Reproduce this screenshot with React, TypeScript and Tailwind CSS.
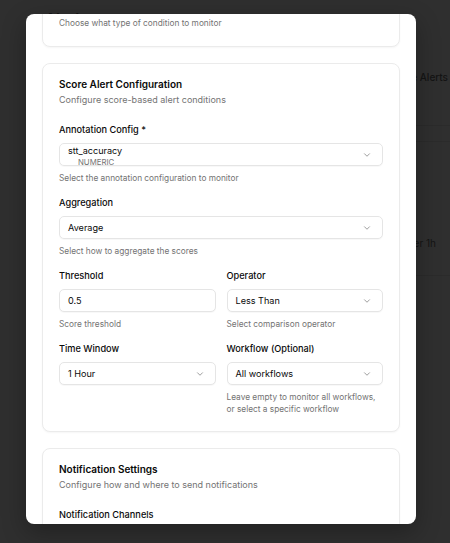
import React from "react";
import { ChevronDown } from "lucide-react";

function Chevron() {
  return <ChevronDown className="w-[10px] h-[10px] text-[#8a8a8a]" strokeWidth={2} />;
}

function SelectBox({ children }: { children: React.ReactNode }) {
  return (
    <div className="flex h-[23px] items-center justify-between rounded-[5px] border border-[#e5e5e5] bg-white pl-[8px] pr-[10px] shadow-[0_1px_1px_rgba(0,0,0,0.03)]">
      <div className="text-[9.1px] leading-[12px] text-[#0a0a0a]">{children}</div>
      <Chevron />
    </div>
  );
}

function Label({ children }: { children: React.ReactNode }) {
  return <div className="text-[9.2px] font-medium leading-[14px] text-[#0a0a0a]">{children}</div>;
}

function Help({ children }: { children: React.ReactNode }) {
  return <div className="text-[8.3px] leading-[12px] text-[#737373]">{children}</div>;
}

function Card({ title, desc, children }: { title: string; desc: string; children: React.ReactNode }) {
  return (
    <div className="rounded-[8px] border border-[#ebebeb] bg-white px-4 pt-[13px] pb-4 shadow-[0_1px_2px_rgba(0,0,0,0.04)]">
      <div className="text-[10px] font-semibold leading-[14px] text-[#0a0a0a]">{title}</div>
      <div className="mt-[2px] text-[9px] leading-[13px] text-[#737373]">{desc}</div>
      <div className="mt-[17px] flex flex-col gap-3">{children}</div>
    </div>
  );
}

export default function App() {
  return (
    <div className="relative h-[543px] w-[450px] overflow-hidden bg-[#2f2f2f] font-['Inter',sans-serif]">
      {/* background page under overlay */}
      <div className="pl-[45px] pt-[9px] text-[15px] font-semibold leading-[20px] text-[#161616]">Alerts</div>
      <div className="mt-[26px] ml-[380px] flex h-[71px] items-start justify-end border-b border-[#2b2b2b] pr-[2px] pt-[15px]">
        <span className="shrink-0 whitespace-nowrap text-[10px] font-medium leading-[14px] text-[#141414]">Manage Score Alerts</span>
      </div>
      <div className="ml-[380px] mt-[15px] flex h-[135px] items-end justify-end border-y border-[#2b2b2b] pr-[14px] pb-[25px]">
        <span className="shrink-0 whitespace-nowrap text-[10px] leading-[14px] text-[#141414]">&lt; 0.5 over 1h</span>
      </div>

      {/* modal */}
      <div className="absolute left-[26px] top-[14px] h-[510px] w-[390px] overflow-hidden rounded-[8px] bg-white shadow-[0_8px_24px_rgba(0,0,0,0.3)]">
        <div className="flex flex-col gap-4 px-4">
          <div className="-mt-[10px] rounded-[8px] border border-[#ebebeb] bg-white px-4 pt-[12px] pb-4 shadow-[0_1px_2px_rgba(0,0,0,0.04)]">
            <div className="text-[8.3px] leading-[13px] text-[#737373]">Choose what type of condition to monitor</div>
          </div>

          <Card title="Score Alert Configuration" desc="Configure score-based alert conditions">
            <div className="flex flex-col">
              <Label>Annotation Config *</Label>
              <div className="mt-[6px] flex h-[23px] items-center justify-between rounded-[5px] border border-[#e5e5e5] bg-white pl-[8px] pr-[10px] shadow-[0_1px_1px_rgba(0,0,0,0.03)]">
                <div className="flex flex-col pt-[3px]">
                  <span className="text-[9.1px] leading-[12px] text-[#0a0a0a]">stt_accuracy</span>
                  <span className="pl-[10px] text-[7.8px] leading-[10px] text-[#737373]">NUMERIC</span>
                </div>
                <Chevron />
              </div>
              <div className="mt-[6px]">
                <Help>Select the annotation configuration to monitor</Help>
              </div>
            </div>
            <div className="flex flex-col">
              <Label>Aggregation</Label>
              <div className="mt-[6px]">
                <SelectBox>Average</SelectBox>
              </div>
              <div className="mt-[6px]">
                <Help>Select how to aggregate the scores</Help>
              </div>
            </div>
            <div className="grid grid-cols-2 gap-x-[11px]">
              <div className="flex flex-col">
                <Label>Threshold</Label>
                <div className="mt-[6px] flex h-[23px] items-center rounded-[5px] border border-[#e5e5e5] bg-white px-[8px] text-[9.1px] text-[#0a0a0a] shadow-[0_1px_1px_rgba(0,0,0,0.03)]">
                  0.5
                </div>
                <div className="mt-[6px]">
                  <Help>Score threshold</Help>
                </div>
              </div>
              <div className="flex flex-col">
                <Label>Operator</Label>
                <div className="mt-[6px]">
                  <SelectBox>Less Than</SelectBox>
                </div>
                <div className="mt-[6px]">
                  <Help>Select comparison operator</Help>
                </div>
              </div>
            </div>
            <div className="grid grid-cols-2 gap-x-[11px]">
              <div className="flex flex-col">
                <Label>Time Window</Label>
                <div className="mt-[6px]">
                  <SelectBox>1 Hour</SelectBox>
                </div>
              </div>
              <div className="flex flex-col">
                <Label>Workflow (Optional)</Label>
                <div className="mt-[6px]">
                  <SelectBox>All workflows</SelectBox>
                </div>
                <div className="mt-[6px]">
                  <Help>
                    Leave empty to monitor all workflows,
                    <br />
                    or select a specific workflow
                  </Help>
                </div>
              </div>
            </div>
          </Card>

          <Card title="Notification Settings" desc="Configure how and where to send notifications">
            <Label>Notification Channels</Label>
            <div className="h-[23px] rounded-[5px] border border-[#e5e5e5]" />
          </Card>
        </div>
      </div>
    </div>
  );
}
